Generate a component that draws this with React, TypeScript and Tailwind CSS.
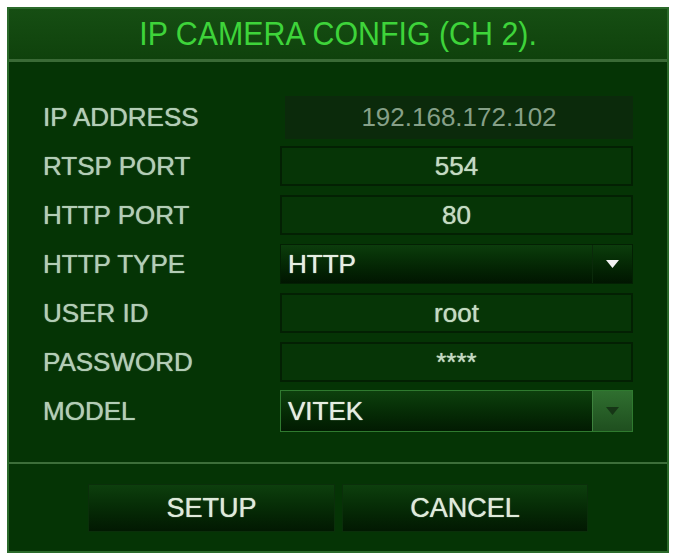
const rows = [
  { label: "IP ADDRESS", value: "192.168.172.102", kind: "readonly" },
  { label: "RTSP PORT", value: "554", kind: "field" },
  { label: "HTTP PORT", value: "80", kind: "field" },
  { label: "HTTP TYPE", value: "HTTP", kind: "select" },
  { label: "USER ID", value: "root", kind: "field" },
  { label: "PASSWORD", value: "****", kind: "field" },
  { label: "MODEL", value: "VITEK", kind: "selectActive" },
];

function Arrow({ className }: { className: string }) {
  return (
    <svg width="13" height="8" viewBox="0 0 13 8" className={className}>
      <path d="M0 0 L13 0 L6.5 8 Z" fill="currentColor" />
    </svg>
  );
}

function Control({ kind, value }: { kind: string; value: string }) {
  if (kind === "readonly") {
    return (
      <div className="ml-[5px] flex h-[43px] w-[348px] items-center justify-center bg-[#0b2a0b] text-[#86a088]">
        {value}
      </div>
    );
  }
  if (kind === "field") {
    return (
      <div className="flex h-[40px] w-[353px] items-center justify-center border-2 border-[#032003] bg-[#063506] text-[#c4dbc2] [text-shadow:0_0_1px_#c4dbc2]">
        {value}
      </div>
    );
  }
  const active = kind === "selectActive";
  return (
    <div
      className={
        active
          ? "flex h-[42px] w-[353px] border border-[#2f7a2f] bg-gradient-to-b from-[#0d400d] to-[#021b02]"
          : "flex h-[40px] w-[353px] border border-[#032003] bg-gradient-to-b from-[#0c3d0c] to-[#011601]"
      }
    >
      <div className="flex flex-1 items-center pl-[7px] text-[#e6eee2] [text-shadow:0_0_1px_#e6eee2]">
        {value}
      </div>
      {active ? (
        <div className="flex w-[40px] items-center justify-center border-l border-[#3d823d] bg-gradient-to-b from-[#2f6f2f] to-[#1f4f1f]">
          <Arrow className="text-[#163616]" />
        </div>
      ) : (
        <div className="flex w-[40px] items-center justify-center border-l border-[#0a2a0a]">
          <Arrow className="text-[#f2f2f2]" />
        </div>
      )}
    </div>
  );
}

export default function App() {
  return (
    <div
      className="h-[554px] w-[674px] bg-white pl-[7px] pt-[7px]"
      style={{ fontFamily: '"Liberation Sans", Arial, sans-serif' }}
    >
      <div className="flex h-[546px] w-[662px] flex-col border-2 border-[#2b6a2b] bg-[#053405]">
        <div className="flex h-[53px] items-center justify-center border-b-[3px] border-[#3a6a36] bg-gradient-to-b from-[#164e13] to-[#0f420c]">
          <span className="scale-x-[0.92] text-[33px] text-[#3ed43a]">
            IP CAMERA CONFIG (CH 2).
          </span>
        </div>

        <div className="flex flex-col gap-[9px] pb-[31px] pl-[34px] pt-[35px] text-[26px]">
          {rows.map((r) => (
            <div key={r.label} className="flex h-[40px] items-center">
              <div className="w-[237px] text-[#b3cdb6] [text-shadow:0_0_1px_#b3cdb6]">
                {r.label}
              </div>
              <Control kind={r.kind} value={r.value} />
            </div>
          ))}
        </div>

        <div className="flex flex-1 justify-center gap-[7px] border-t-2 border-[#3d6e3a] pt-[20px] text-[27px]">
          <button className="flex h-[48px] w-[247px] items-center justify-center border border-[#0a2f0a] bg-gradient-to-b from-[#0d3f0d] to-[#021902] text-[#dfeadb] [text-shadow:0_0_1px_#dfeadb]">
            SETUP
          </button>
          <button className="flex h-[48px] w-[246px] items-center justify-center border border-[#0a2f0a] bg-gradient-to-b from-[#0d3f0d] to-[#021902] text-[#dfeadb] [text-shadow:0_0_1px_#dfeadb]">
            CANCEL
          </button>
        </div>
      </div>
    </div>
  );
}
